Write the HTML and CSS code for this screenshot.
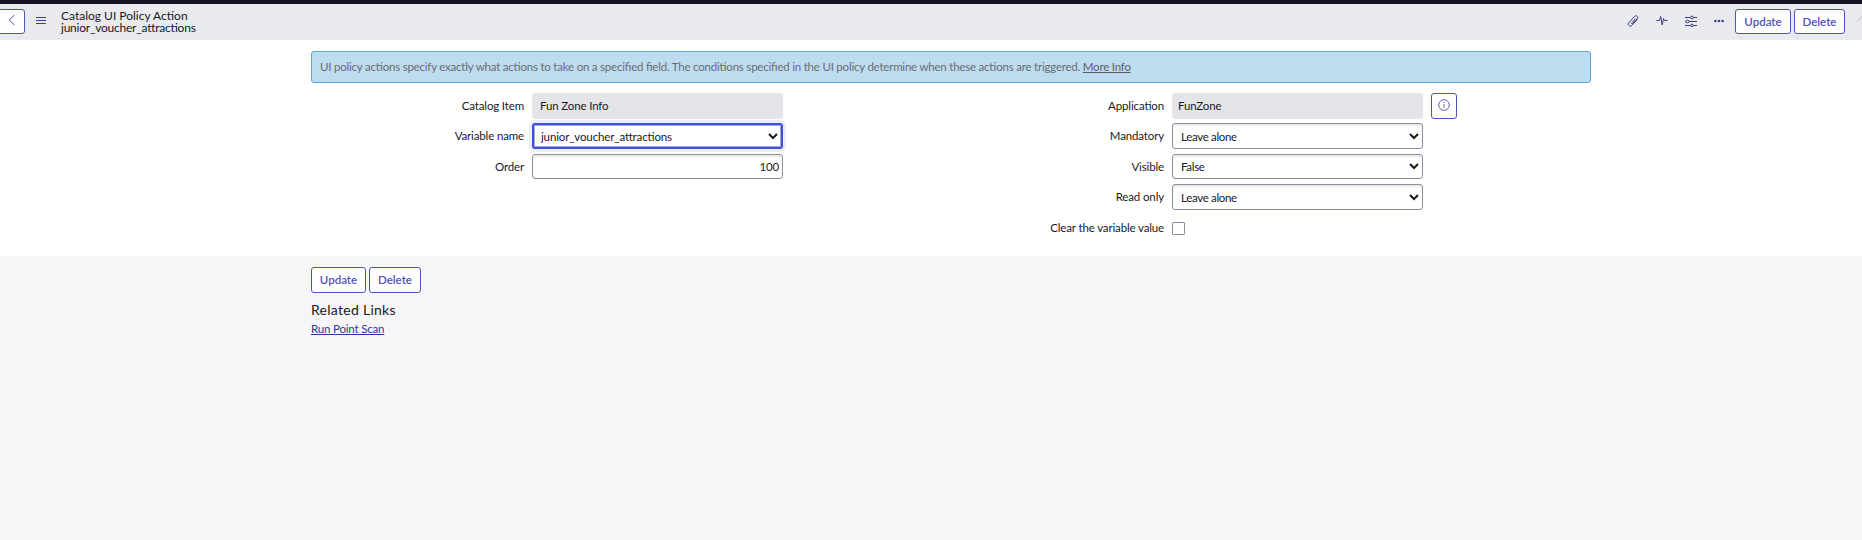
FILE: index.html
```html
<!DOCTYPE html>
<html lang="en">
<head>
<meta charset="utf-8">
<title>Catalog UI Policy Action</title>
<link rel="stylesheet" href="styles.css">
</head>
<body>
<header class="header">
  <button class="btn back" aria-label="Back"><svg width="8" height="12" viewBox="0 0 8 12"><path d="M6.5 1 1.2 6l5.3 5"/></svg></button>
  <svg class="icon menu" width="10" height="8" viewBox="0 0 10 8"><path d="M0 1.5h10M0 4.500h10M0 7.500h10"/></svg>
  <h1 class="title"><span class="title-main">Catalog UI Policy Action</span><span class="title-sub">junior_voucher_attractions</span></h1>
  <div class="tools">
    <svg class="icon" width="12" height="12" viewBox="0 0 12 12"><path d="M8.300 3.800 4.800 7.700c-.6.7.4 1.500 1 .8l4.400-4.800c1.600-2-1-4-2.700-2.200L2 7.300c-2 2.400.8 5.200 3.100 2.900l5.300-5.700"/></svg>
    <svg class="icon" width="12" height="12" viewBox="0 0 12 12"><path d="M.5 5.500h3L4.700 1.500 6.200 10 7.500 3.500 8.500 5.500h3"/></svg>
    <svg class="icon" width="12" height="12" viewBox="0 0 12 12"><path d="M0 2.500h5.500M8.500 2.500H12M0 6.500h1M4 6.500h8M0 10.500h5.500M8.500 10.500H12"/><circle cx="7" cy="2.500" r="1.400"/><circle cx="2.500" cy="6.500" r="1.400"/><circle cx="7" cy="10.500" r="1.300"/></svg>
    <svg class="icon dots" width="10" height="4" viewBox="0 0 10 4"><circle cx="1.400" cy="2" r="1.300"/><circle cx="5" cy="2" r="1.300"/><circle cx="8.600" cy="2" r="1.300"/></svg>
  </div>
  <div class="actions"><button class="btn update">Update</button><button class="btn delete">Delete</button></div>
  <svg class="icon up" width="11" height="12" viewBox="0 0 11 12"><path d="M5.500 12V1M.8 5.700 5.500 1l4.700 4.700"/></svg>
</header>
<main>
  <section class="form">
    <p class="notice"><span>UI policy actions specify exactly what actions to take on a specified field. The conditions specified in the UI policy determine when these actions are triggered. <a href="#">More Info</a></span></p>
    <div class="columns">
      <div class="column">
        <div class="row"><label>Catalog Item</label><div class="control readonly">Fun Zone Info</div></div>
        <div class="row"><label>Variable name</label><select class="control focused"><option>junior_voucher_attractions</option></select></div>
        <div class="row"><label>Order</label><input class="control number short" value="100"></div>
      </div>
      <div class="column">
        <div class="row"><label>Application</label><div class="control readonly tight">FunZone</div><button class="btn info" aria-label="Info"><svg width="12" height="12" viewBox="0 0 12 12"><circle cx="6" cy="6" r="5.300"/><path d="M6 5v4M6 2.800v1.200"/></svg></button></div>
        <div class="row"><label>Mandatory</label><select class="control choice"><option>Leave alone</option></select></div>
        <div class="row"><label>Visible</label><select class="control choice short"><option>False</option></select></div>
        <div class="row"><label>Read only</label><select class="control choice"><option>Leave alone</option></select></div>
        <div class="row check-row"><label>Clear the variable value</label><input class="check" type="checkbox"></div>
      </div>
    </div>
  </section>
  <section class="footer">
    <div class="actions"><button class="btn update">Update</button><button class="btn delete">Delete</button></div>
    <h2 class="links-title">Related Links</h2>
    <a class="link" href="#">Run Point Scan</a>
  </section>
</main>
</body>
</html>
```
FILE: styles.css
```css
* { box-sizing: border-box; }
body {
  margin: 0;
  height: 540px;
  overflow: hidden;
  background: #f6f6f8;
  color: #181a1f;
  font: 11.5px/16px Lato, "Liberation Sans", sans-serif;
  font-feature-settings: "liga" 1;
  letter-spacing: -.14px;
}
svg { flex: none; fill: none; stroke: #3c3d82; stroke-width: 1; }
.header {
  display: flex;
  height: 40px;
  border-top: 4px solid #161424;
  background: #e9eaee;
  overflow: hidden;
}
.btn {
  display: flex;
  align-items: center;
  justify-content: center;
  flex: none;
  height: 26px;
  padding: 0;
  border: 1px solid #4f52bd;
  border-radius: 3px;
  background: #fff;
  color: #4f52bd;
  font: 600 11.5px/16px Lato, "Liberation Sans", sans-serif;
  letter-spacing: 0;
}
.back { width: 27px; height: 25px; margin: 5px 0 0 -2px; padding-bottom: 3px; }
.back svg { stroke: #4f52bd; }
.menu { margin: 12px 0 0 11px; }
.title { display: flex; flex-direction: column; margin: 6px 0 0 15px; font-size: 12px; font-weight: 400; line-height: 12px; letter-spacing: 0; }
.title-sub { letter-spacing: -.23px; }
.tools { display: flex; align-items: center; gap: 17px; height: 33px; margin-left: auto; }
.dots { fill: #3c3d82; stroke: none; }
.actions { display: flex; gap: 3px; }
.header .actions { margin: 5px 0 0 11px; }
.header .btn { height: 25px; }
.update { width: 55px; }
.delete { width: 52px; }
.header .update { width: 56px; }
.header .delete { width: 51px; }
.up { margin: 11px -6px 0 12px; opacity: .25; }
.form { height: 216px; padding: 11px 271px 0 311px; background: #fff; }
.notice {
  display: flex;
  align-items: center;
  height: 32px;
  margin: 0;
  padding: 0 8px;
  border: 1px solid #5aa9dc;
  border-radius: 3px;
  background: #bddcf0;
  color: #6b6c70;
  letter-spacing: -.215px;
}
.notice a { color: #5d5f65; }
.columns { display: grid; grid-template-columns: 640px 640px; padding-top: 10px; }
.row { display: flex; height: 30.400px; }
label { width: 213px; margin-right: 8px; line-height: 26px; text-align: right; }
.control {
  width: 251px;
  height: 26px;
  padding: 0 3px 0 4px;
  border: 1px solid #8b8fa0;
  border-radius: 3px;
  background: #fff;
  box-shadow: inset 0 2px 2px #e6e8e8;
  color: #181a1f;
  font: inherit;
  letter-spacing: inherit;
}
.choice { letter-spacing: -.32px; }
.short { height: 25px; }
.readonly { padding: 0 8px; border: 0; background: #e4e5e9; box-shadow: none; line-height: 26px; }
.tight { padding-left: 6px; }
.number { text-align: right; }
.focused { padding: 0 2px 0 3px; border: 2px solid #3f51d9; box-shadow: 0 0 0 3px #ededfa, inset 0 0 0 1px #a3a5de; outline: 0; }
.info { width: 26px; margin-left: 8px; padding-bottom: 3px; }
.info svg { stroke: #6668bd; }
.check { appearance: none; width: 13px; height: 13px; margin: 7px 0 0; border: 1px solid #8b8fa0; border-radius: 1px; }
.footer { padding: 11px 0 0 311px; }
.links-title { margin: 8px 0 0; font-size: 14px; font-weight: 400; line-height: 18px; letter-spacing: .28px; }
.link { display: block; width: max-content; margin-top: 2px; color: #2c379f; letter-spacing: -.18px; }
```
